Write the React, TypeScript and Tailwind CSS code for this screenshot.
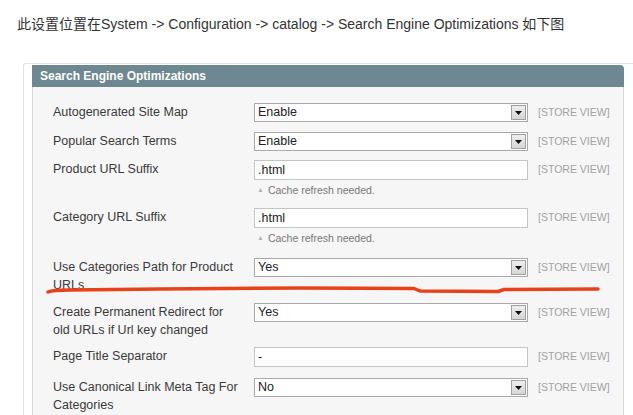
import React from "react";

type Row = {
  label: string[];
  kind: "select" | "input";
  value: string;
  note?: boolean;
  h: string;
};

const rows: Row[] = [
  { label: ["Autogenerated Site Map"], kind: "select", value: "Enable", h: "h-[29px]" },
  { label: ["Popular Search Terms"], kind: "select", value: "Enable", h: "h-[28px]" },
  { label: ["Product URL Suffix"], kind: "input", value: ".html", note: true, h: "h-[48px]" },
  { label: ["Category URL Suffix"], kind: "input", value: ".html", note: true, h: "h-[50px]" },
  { label: ["Use Categories Path for Product", "URLs"], kind: "select", value: "Yes", h: "h-[45px]" },
  { label: ["Create Permanent Redirect for", "old URLs if Url key changed"], kind: "select", value: "Yes", h: "h-[44px]" },
  { label: ["Page Title Separator"], kind: "input", value: "-", h: "h-[31px]" },
  { label: ["Use Canonical Link Meta Tag For", "Categories"], kind: "select", value: "No", h: "h-[40px]" },
];

function Control({ row }: { row: Row }) {
  if (row.kind === "select") {
    return (
      <div className="flex h-[19px] w-[274px] items-stretch border border-[#a9a9a9] bg-white">
        <span className="flex-1 pl-[3px] text-[12.5px] leading-[17px] text-[#222]">{row.value}</span>
        <span className="my-[1px] mr-[1px] flex w-[15px] items-center justify-center border border-[#a0a0a0] bg-gradient-to-b from-[#eeeeee] to-[#d6d6d6]">
          <svg width="7" height="4" viewBox="0 0 7 4">
            <path d="M0 0h7L3.5 4z" fill="#111" />
          </svg>
        </span>
      </div>
    );
  }
  return (
    <div>
      <div className="h-[20px] w-[274px] border border-[#c4c4c4] bg-white pl-[3px] text-[12.5px] leading-[18px] text-[#222]">
        {row.value}
      </div>
      {row.note && (
        <div className="mt-[3px] flex items-center pl-[3px] text-[10.5px] leading-[14px] text-[#777]">
          <span className="mr-[4px] text-[7px] text-[#b5b5b5]">▲</span>
          Cache refresh needed.
        </div>
      )}
    </div>
  );
}

export default function App() {
  return (
    <div className="relative h-[415px] w-[633px] overflow-hidden bg-white font-['Liberation_Sans','Noto_Sans_CJK_SC',sans-serif]">
      <p className="pl-[17px] pt-[16px] text-[14px] leading-[17px] text-[#333]">
        此设置位置在System -&gt; Configuration -&gt; catalog -&gt; Search Engine Optimizations 如下图
      </p>

      {/* screenshot frame */}
      <div className="ml-[23px] mt-[30px] rounded-tl-[3px] border-l border-t border-[#e3e3e3] pl-[8px] pt-[1px]">
        <div className="w-[592px]">
          <div className="flex h-[22px] items-center rounded-tr-[4px] bg-[#6e8891] pl-[8px] text-[12px] font-bold text-white">
            Search Engine Optimizations
          </div>
          <div className="h-[340px] border-x border-[#d9d9d9] bg-[#f6f6f6] pt-[16px]">
            {rows.map((row, i) => (
              <div key={i} className={`flex ${row.h}`}>
                <div className="w-[221px] whitespace-nowrap pl-[20px] text-[12.5px] leading-[18px] text-[#3a3a3a]">
                  {row.label.map((l, j) => (
                    <div key={j}>{l}</div>
                  ))}
                </div>
                <Control row={row} />
                <div className="pl-[10px] text-[10.5px] leading-[18px] text-[#a2a2a2]">[STORE VIEW]</div>
              </div>
            ))}
          </div>
        </div>
      </div>

      {/* red marker line */}
      <svg className="pointer-events-none absolute inset-0" width="633" height="415">
        <path
          d="M48 292 Q52 290 70 290 L160 289 L300 288 L414 288.5 L420 291 L498 291.5 L504 289.5 L598 289"
          fill="none"
          stroke="#e8421b"
          strokeWidth="3.5"
          strokeLinecap="round"
          strokeLinejoin="round"
        />
      </svg>
    </div>
  );
}
